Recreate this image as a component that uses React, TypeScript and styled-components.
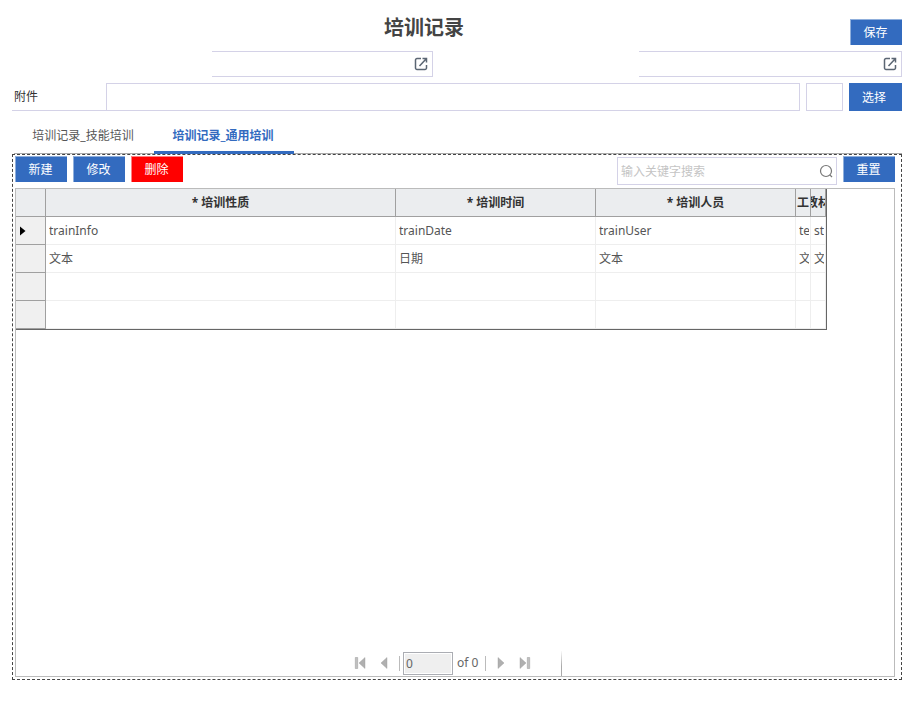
import React from "react";
import styled, { createGlobalStyle, css } from "styled-components";

const Global = createGlobalStyle`
  * { box-sizing: border-box; }
  body {
    margin: 0;
    background: #fff;
    color: #333;
    font: 12px/16px "Noto Sans", "Noto Sans CJK SC", sans-serif;
  }
  button, input { font: inherit; color: inherit; margin: 0; }
`;

const line = "#d4d2e7";

const Page = styled.main`
  display: flex;
  flex-direction: column;
  min-height: 100vh;
  padding: 9px 14px 21px 12px;
`;

const Header = styled.header`
  display: flex;
  align-items: flex-end;
  gap: 14px;
`;

const Title = styled.h1`
  flex: 1;
  margin: 0;
  padding-top: 2px;
  font-size: 20px;
  line-height: 34px;
  text-align: center;
  color: #444;
`;

const Button = styled.button<{ $tone?: "danger"; $tall?: boolean }>`
  flex: none;
  width: ${(p) => (p.$tall ? 53 : 52)}px;
  height: ${(p) => (p.$tall ? 28 : 26)}px;
  padding: ${(p) => (p.$tall ? "2px 3px 0 0" : "0 2px 0 0")};
  border: 0 solid ${(p) => (p.$tone === "danger" ? "#ff8080" : "#8fafdc")};
  border-width: ${(p) => (p.$tall ? "0" : "1px 0 0 1px")};
  background: ${(p) => (p.$tone === "danger" ? "#f00" : "#336bbf")};
  color: #fff;
  cursor: pointer;
`;

const Fields = styled.div`
  display: grid;
  grid-template-columns: 200px 221fr 206px 263fr;
  margin-top: 6px;
`;

const LinkField = styled.div<{ $column: number }>`
  grid-column: ${(p) => p.$column};
  display: flex;
  align-items: center;
  height: 26px;
  padding-right: 4px;
  border: 1px solid ${line};
  border-left: 0;
`;

const BareInput = styled.input`
  flex: 1;
  min-width: 0;
  height: 100%;
  padding: 0 3px;
  border: 0;
  background: transparent;
  outline: none;
  &::placeholder { color: #c4c4c4; opacity: 1; }
`;

const IconButton = styled.button`
  display: flex;
  padding: 0;
  border: 0;
  background: none;
  cursor: pointer;
`;

const Attachment = styled.div`
  display: flex;
  gap: 6px;
  margin-top: 6px;
`;

const AttachmentField = styled.div`
  display: flex;
  flex: 1;
`;

const AttachmentLabel = styled.label`
  width: 94px;
  padding: 0 2px;
  border-bottom: 1px solid ${line};
  line-height: 27px;
`;

const BoxInput = styled.input<{ $width?: number }>`
  ${(p) => (p.$width ? css`flex: none; width: ${p.$width}px;` : css`flex: 1; min-width: 0;`)}
  height: 28px;
  padding: 0 3px;
  border: 1px solid ${line};
  background: #fff;
  outline: none;
`;

const Tabs = styled.div`
  display: flex;
  margin: 7px 0 0 2px;
  border-bottom: 1px solid #ababab;
`;

const Tab = styled.button<{ $active?: boolean }>`
  width: 140px;
  height: 36px;
  margin-bottom: -1px;
  padding: 2px 2px 0 0;
  border: 0;
  border-bottom: 3px solid ${(p) => (p.$active ? "#336bbf" : "transparent")};
  background: none;
  color: ${(p) => (p.$active ? "#336bbf" : "#555")};
  font-weight: ${(p) => (p.$active ? 700 : 400)};
  cursor: pointer;
`;

const Panel = styled.section`
  display: flex;
  flex: 1;
  flex-direction: column;
  padding: 1px 6px 2px 2px;
  border: 1px dashed #444;
`;

const Toolbar = styled.div`
  display: flex;
  gap: 6px;
`;

const Search = styled.div`
  display: flex;
  align-items: center;
  width: 220px;
  height: 28px;
  margin: 1px 0 0 auto;
  padding-right: 3px;
  border: 1px solid ${line};
`;

const Frame = styled.div`
  display: flex;
  flex: 1;
  flex-direction: column;
  margin-top: 3px;
  border: 1px solid #bbb;
`;

const Grid = styled.table`
  table-layout: fixed;
  width: 811px;
  border-collapse: separate;
  border-spacing: 0;
  border-right: 1px solid #666;
  border-bottom: 1px solid #666;
`;

const HeadCell = styled.th`
  height: 28px;
  padding: 0;
  border-right: 1px solid #a0a0a0;
  border-bottom: 1px solid #a0a0a0;
  background: #ebedef;
  color: #333;
  white-space: nowrap;
`;

const HeadText = styled.div`
  display: flex;
  justify-content: center;
  overflow: hidden;
`;

const RowHead = styled.th`
  height: 28px;
  padding: 0 0 0 4px;
  border-right: 1px solid #a0a0a0;
  border-bottom: 1px solid #a0a0a0;
  background: #f0f0f0;
`;

const Cell = styled.td`
  height: 28px;
  padding: 0 1px 0 3px;
  border-right: 1px solid #eee;
  border-bottom: 1px solid #eee;
  color: #555;
  white-space: nowrap;
`;

const CellText = styled.div`
  overflow: hidden;
`;

const Pager = styled.nav`
  display: flex;
  align-items: center;
  align-self: center;
  width: 214px;
  height: 25px;
  margin: auto 0 0;
  padding: 0 0 1px;
  border-right: 1px solid;
  border-image: linear-gradient(#fff, #aaa 60%) 1;
  color: #666;
`;

const PageButton = styled(IconButton)`
  justify-content: center;
  width: 24px;
`;

const Divider = styled.span`
  width: 1px;
  height: 15px;
  margin: 0 3px;
  background: #bbb;
`;

const PageInput = styled.input`
  width: 50px;
  height: 23px;
  padding: 0 2px;
  border: 1px solid #abadb3;
  background: #efefef;
  box-shadow: inset 0 0 0 1px #fff;
`;

const PageTotal = styled.span`
  margin: 0 4px;
`;

const OpenIcon = () => (
  <svg width="14" height="14" viewBox="0 0 14 14" fill="none" stroke="#5b6673" strokeWidth="1.5">
    <path d="M7 1.5H3A1.5 1.5 0 0 0 1.5 3v8A1.5 1.5 0 0 0 3 12.5h8a1.5 1.5 0 0 0 1.5-1.5V8" />
    <path d="M8.5 1.5h4v4M12.5 1.5 5.5 9" />
  </svg>
);

const SearchIcon = () => (
  <svg width="14" height="14" viewBox="0 0 14 14" fill="none" stroke="#777" strokeWidth="1.2">
    <circle cx="7" cy="7" r="5.5" />
    <path d="m10.8 10.8 2.2 2.2" />
  </svg>
);

const CurrentIcon = () => (
  <svg width="6" height="10" viewBox="0 0 6 10" display="block">
    <path d="M0 0.5 5.5 5 0 9.5z" fill="#000" />
  </svg>
);

const Arrow = ({ flip, bar }: { flip?: boolean; bar?: boolean }) => (
  <svg width="12" height="12" viewBox="0 0 12 12">
    <g transform={flip ? "matrix(-1 0 0 1 12 0)" : undefined}>
      <path d={bar ? "M1 0.5v11L7 6z" : "M3 0.5v11L9 6z"} fill="#b0b0b0" stroke="#999" strokeWidth="0.4" />
      {bar && <path d="M8.3 0.5h2.4v11H8.3z" fill="#c0c0c0" stroke="#999" strokeWidth="0.5" />}
    </g>
  </svg>
);

const columns = [
  { title: "* 培训性质", width: 350 },
  { title: "* 培训时间", width: 200 },
  { title: "* 培训人员", width: 200 },
  { title: "工", width: 15 },
  { title: "教材", width: 15 },
];

const rows = [
  ["trainInfo", "trainDate", "trainUser", "te", "st"],
  ["文本", "日期", "文本", "文", "文"],
  ["", "", "", "", ""],
  ["", "", "", "", ""],
];

export default function App() {
  return (
    <Page>
      <Global />
      <Header>
        <Title>培训记录</Title>
        <Button>保存</Button>
      </Header>
      <Fields>
        {[2, 4].map((column) => (
          <LinkField key={column} $column={column}>
            <BareInput aria-label="关联" />
            <IconButton aria-label="打开"><OpenIcon /></IconButton>
          </LinkField>
        ))}
      </Fields>
      <Attachment>
        <AttachmentField>
          <AttachmentLabel htmlFor="attachment">附件</AttachmentLabel>
          <BoxInput id="attachment" />
        </AttachmentField>
        <BoxInput $width={37} aria-label="数量" />
        <Button $tall>选择</Button>
      </Attachment>
      <Tabs role="tablist">
        <Tab role="tab" aria-selected={false}>培训记录_技能培训</Tab>
        <Tab role="tab" aria-selected $active>培训记录_通用培训</Tab>
      </Tabs>
      <Panel>
        <Toolbar>
          <Button>新建</Button>
          <Button>修改</Button>
          <Button $tone="danger">删除</Button>
          <Search>
            <BareInput aria-label="搜索" placeholder="输入关键字搜索" />
            <IconButton aria-label="搜索"><SearchIcon /></IconButton>
          </Search>
          <Button>重置</Button>
        </Toolbar>
        <Frame>
          <Grid>
            <colgroup>
              <col style={{ width: 30 }} />
              {columns.map((c, i) => <col key={i} style={{ width: c.width }} />)}
            </colgroup>
            <thead>
              <tr>
                <HeadCell />
                {columns.map((c, i) => (
                  <HeadCell key={i} scope="col"><HeadText>{c.title}</HeadText></HeadCell>
                ))}
              </tr>
            </thead>
            <tbody>
              {rows.map((r, i) => (
                <tr key={i}>
                  <RowHead>{i === 0 && <CurrentIcon />}</RowHead>
                  {r.map((v, j) => <Cell key={j}><CellText>{v}</CellText></Cell>)}
                </tr>
              ))}
            </tbody>
          </Grid>
          <Pager aria-label="分页">
            <PageButton aria-label="首页"><Arrow flip bar /></PageButton>
            <PageButton aria-label="上一页"><Arrow flip /></PageButton>
            <Divider />
            <PageInput aria-label="页码" defaultValue="0" />
            <PageTotal>of 0</PageTotal>
            <Divider />
            <PageButton aria-label="下一页"><Arrow /></PageButton>
            <PageButton aria-label="末页"><Arrow bar /></PageButton>
          </Pager>
        </Frame>
      </Panel>
    </Page>
  );
}
